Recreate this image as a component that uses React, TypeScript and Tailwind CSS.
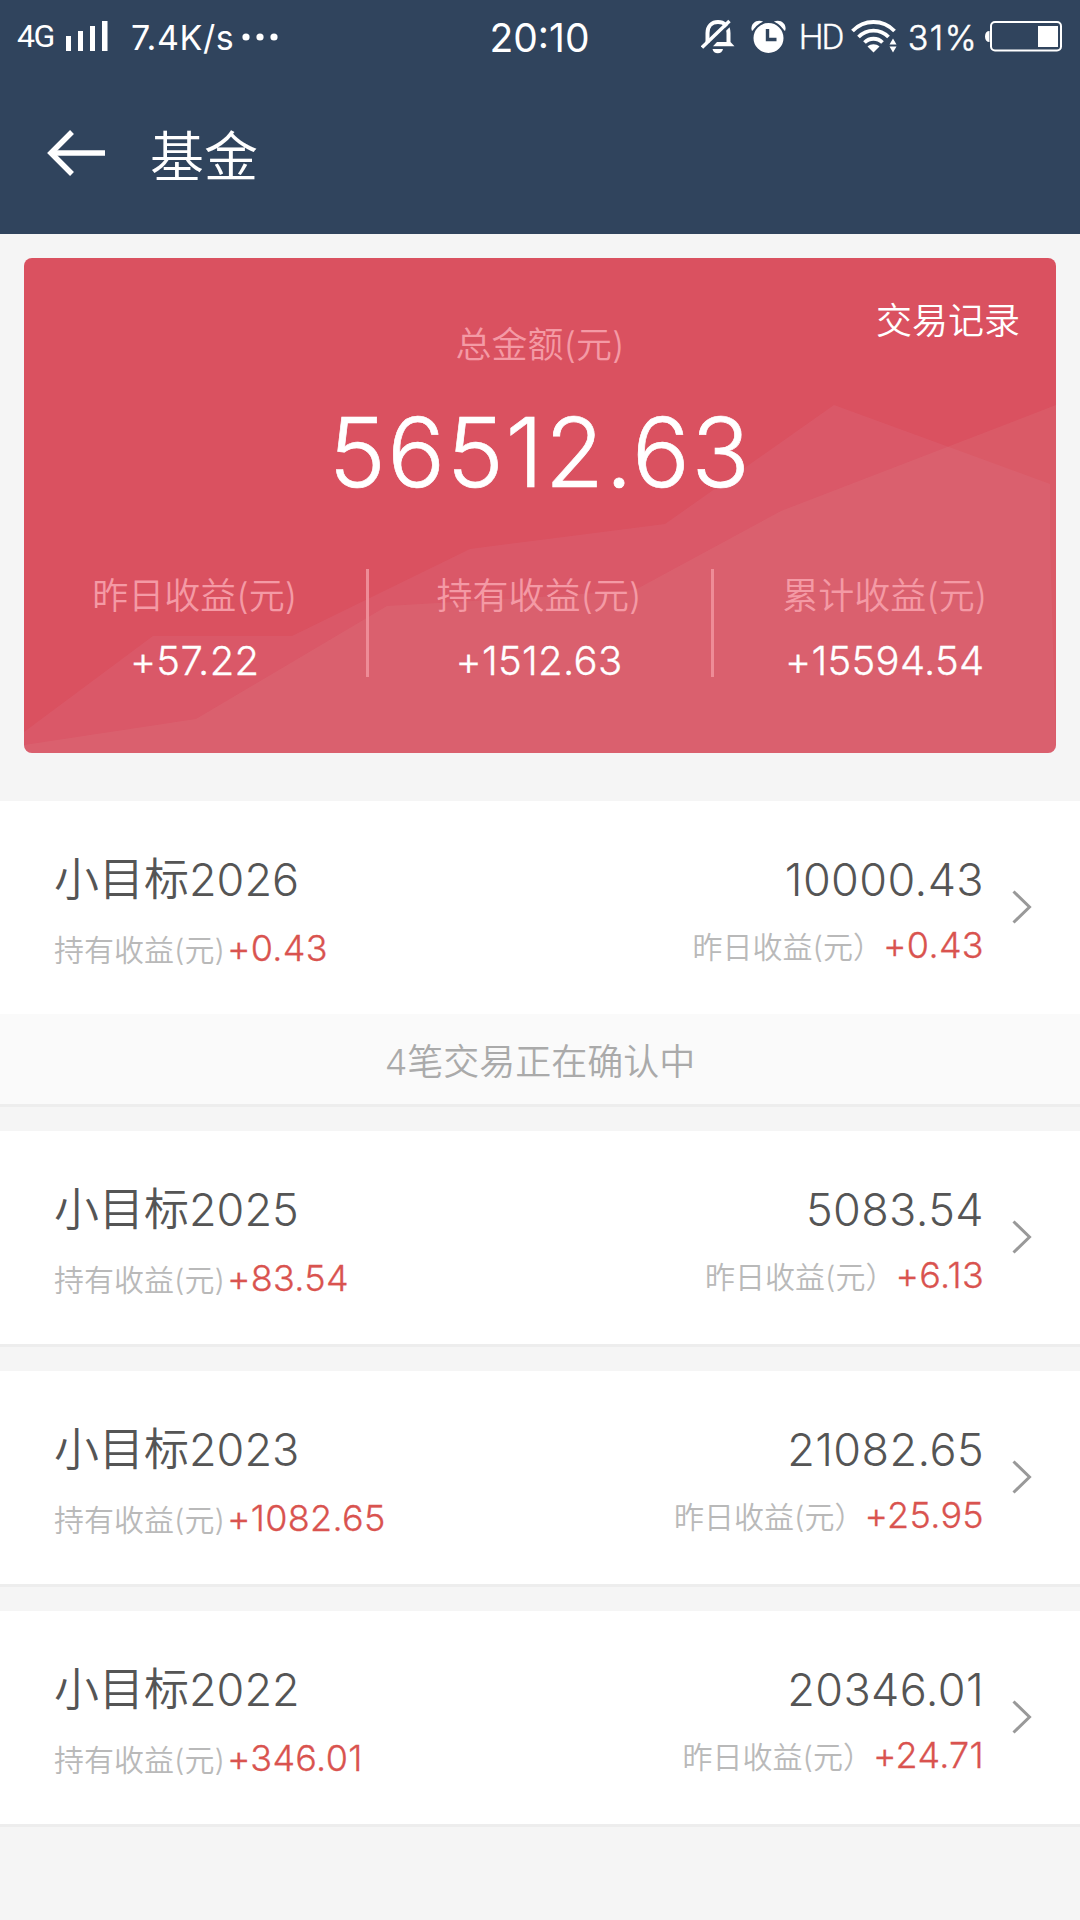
import { clsx } from "clsx";

type Fund = {
  name: string;
  amount: string;
  held: string;
  yesterday: string;
  notice?: string;
};

const funds: Fund[] = [
  { name: "小目标2026", amount: "10000.43", held: "+0.43", yesterday: "+0.43", notice: "4笔交易正在确认中" },
  { name: "小目标2025", amount: "5083.54", held: "+83.54", yesterday: "+6.13" },
  { name: "小目标2023", amount: "21082.65", held: "+1082.65", yesterday: "+25.95" },
  { name: "小目标2022", amount: "20346.01", held: "+346.01", yesterday: "+24.71" },
];

const stats = [
  { label: "昨日收益(元)", value: "+57.22" },
  { label: "持有收益(元)", value: "+1512.63" },
  { label: "累计收益(元)", value: "+15594.54" },
];

function StatusBar() {
  return (
    <div className="grid h-[75px] grid-cols-[1fr_auto_1fr] items-center pl-[17px] pr-[18px] font-normal">
      <div className="flex items-center">
        <span className="w-[37px] pb-1 font-['Roboto',sans-serif] text-[32px] leading-none tracking-[-1.5px]">4G</span>
        <svg width="42" height="30" viewBox="0 0 42 30" className="ml-[12px] mb-[3px]" fill="#fff">
          <rect x="0" y="15" width="5" height="15" />
          <rect x="12" y="10" width="5" height="20" />
          <rect x="24" y="5" width="5" height="25" />
          <rect x="36" y="0" width="5.5" height="30" />
        </svg>
        <span className="ml-[23px] text-[34px] leading-none tracking-[0.6px]">7.4K/s</span>
        <svg width="36" height="8" viewBox="0 0 36 8" className="ml-[8px] mb-[1px]" fill="#fff">
          <circle cx="4" cy="4" r="3.6" />
          <circle cx="18" cy="4" r="3.6" />
          <circle cx="32" cy="4" r="3.6" />
        </svg>
      </div>
      <span className="text-[39px] leading-none">20:10</span>
      <div className="flex items-center justify-end">
        <svg width="34" height="35" viewBox="0 0 34 35" className="mb-[2px]" fill="none">
          <path d="M6.500 24V14C6.500 7 11 3 17 3C23 3 27.500 7 27.500 14V23" stroke="#fff" strokeWidth="4" />
          <path d="M12 27.300L16 23H29.500L33.500 27.300Z" fill="#fff" />
          <path d="M11.500 30H22C21.500 32.800 19.500 34.300 16.800 34.300C14 34.300 12 32.800 11.500 30Z" fill="#fff" />
          <path d="M3 31L31 4" stroke="#30445d" strokeWidth="3" />
          <path d="M1 28.500L28.500 2" stroke="#fff" strokeWidth="3.500" />
        </svg>
        <svg width="35" height="34" viewBox="0 0 35 34" className="ml-[16px] mb-[2px]" fill="none">
          <path d="M1 11C-1.500 4.500 5 -1.500 12 1.500Z" fill="#fff" />
          <path d="M34 11C36.500 4.500 30 -1.500 23 1.500Z" fill="#fff" />
          <circle cx="17.500" cy="18" r="16" fill="#fff" stroke="#30445d" strokeWidth="2" />
          <path d="M16.500 9V19.500H25.500" stroke="#30445d" strokeWidth="3.400" />
        </svg>
        <span className="ml-[13px] w-[44px] font-['Roboto',sans-serif] text-[35px] font-light leading-none tracking-[-2px] [-webkit-text-stroke:0.4px]">
          HD
        </span>
        <svg width="46" height="33" viewBox="0 0 46 33" className="ml-[8px] mb-[2px]" fill="none">
          <path d="M1.500 11C13 -1 32 -1 43.500 11" stroke="#fff" strokeWidth="3.800" />
          <path d="M7.500 17C16 8.500 29 8.500 37.500 17" stroke="#fff" strokeWidth="3.800" />
          <path d="M13.500 22.500C18.500 17.500 26.500 17.500 31.500 22.500" stroke="#fff" strokeWidth="3.800" />
          <path d="M16.500 26.500C20 23.500 25 23.500 28.500 26.500L22.500 32.500Z" fill="#fff" />
          <path d="M38.500 24.500L42 18.500L45.500 24.500ZM38.500 26.500L42 32.500L45.500 26.500Z" fill="#fff" />
        </svg>
        <span className="ml-[11px] text-[34px] font-light leading-none tracking-[1.5px] [-webkit-text-stroke:0.5px]">31%</span>
        <svg width="77" height="31" viewBox="0 0 77 31" className="ml-[7px] mb-[2px]" fill="none">
          <path d="M4.500 10C1.500 10 0 12 0 15.500C0 19 1.500 21 4.500 21Z" fill="#fff" />
          <rect x="6" y="1" width="70" height="28.500" rx="4" stroke="#fff" strokeWidth="2" />
          <rect x="53" y="5" width="20" height="21" fill="#fff" />
        </svg>
      </div>
    </div>
  );
}

function Header() {
  return (
    <header className="h-[234px] bg-[#30445d] text-white">
      <StatusBar />
      <div className="flex h-[159px] items-center pl-[46px]">
        <svg width="60" height="48" viewBox="0 0 60 48" className="mb-[3px]" fill="none" stroke="#fff" strokeWidth="5.500">
          <path d="M59 24H6" />
          <path d="M26 3L5 24L26 45" />
        </svg>
        <h1 className="ml-[44px] pt-[7px] text-[54px] font-[350] leading-none">基金</h1>
      </div>
    </header>
  );
}

function Summary() {
  return (
    <section className="relative mx-6 mt-6 h-[495px] overflow-hidden rounded-lg bg-[#da5160] text-white">
      <svg className="absolute inset-0" width="1032" height="495" viewBox="0 0 1032 495" fill="#e39a9e" fillOpacity="0.13">
        <path d="M0 474L129 378H268L446 291L516 282L641 266L810 147L1026 226V282L1032 495H0Z" fill="#e38ea2" />
        <path d="M0 487L172 461L363 348L516 339L611 332L757 253L1032 147V495H0Z" />
      </svg>
      <div className="relative">
        <div className="grid grid-cols-[1fr_auto_1fr] items-start pt-[43px] text-[36px] leading-10">
          <span className="col-start-2 mt-[24px] text-[#f49aa5]">总金额(元)</span>
          <a className="pr-9 text-right">交易记录</a>
        </div>
        <div className="mt-[29px] text-center text-[96px] font-light leading-[116px] tracking-[1.7px] [-webkit-text-stroke:0.7px]">
          56512.63
        </div>
        <div className="ml-px mr-[-2px] mt-[59px] grid grid-cols-3">
          {stats.map((stat, i) => (
            <div
              key={stat.label}
              className={clsx("h-[108px] pr-[2px] pt-[7px] text-center", i < 2 && "border-r-[3px] border-[#ee8c97]")}
            >
              <div className="text-[36px] leading-10 text-[#f49aa5]">{stat.label}</div>
              <div className="mt-[29px] text-[40px] font-light leading-8 tracking-[0.3px] [-webkit-text-stroke:0.3px]">
                {stat.value}
              </div>
            </div>
          ))}
        </div>
      </div>
    </section>
  );
}

function FundItem({ fund }: { fund: Fund }) {
  return (
    <li className="mb-6 border-b-[3px] border-[#ededed] bg-white">
      <div className="flex h-[213px] items-start pl-[54px] pr-12 pt-[54px]">
        <div className="flex-1">
          <div className="text-[45px] leading-[50px] text-[#555]">{fund.name}</div>
          <div className="mt-[23px] flex items-baseline leading-10">
            <span className="text-[30px] text-[#b9b9b9]">持有收益(元)</span>
            <span className="ml-[2px] text-[36px] tracking-[0.3px] text-[#d9534f] [-webkit-text-stroke:0.3px]">{fund.held}</span>
          </div>
        </div>
        <div className="text-right">
          <div className="text-[45px] leading-[50px] tracking-[0.4px] text-[#555]">{fund.amount}</div>
          <div className="mt-[20px] flex items-baseline justify-end leading-10">
            <span className="text-[30px] text-[#b9b9b9]">昨日收益(元）</span>
            <span className="text-[36px] tracking-[0.3px] text-[#d9534f] [-webkit-text-stroke:0.3px]">{fund.yesterday}</span>
          </div>
        </div>
        <svg width="20" height="34" viewBox="0 0 20 34" className="ml-[28px] mt-[35px]" fill="none" stroke="#999" strokeWidth="3">
          <path d="M1.500 1.500L17.500 17L1.500 32.500" />
        </svg>
      </div>
      {fund.notice && (
        <div className="h-[90px] bg-[#fafafa] pt-[3px] text-center text-[36px] leading-[90px] text-[#aaa]">{fund.notice}</div>
      )}
    </li>
  );
}

export default function App() {
  return (
    <div className="min-h-[1920px] w-[1080px] bg-[#f5f5f5] font-['Inter','Noto_Sans_CJK_SC',sans-serif] font-[350]">
      <Header />
      <Summary />
      <ul className="mt-[48px]">
        {funds.map((fund) => (
          <FundItem key={fund.name} fund={fund} />
        ))}
      </ul>
    </div>
  );
}
